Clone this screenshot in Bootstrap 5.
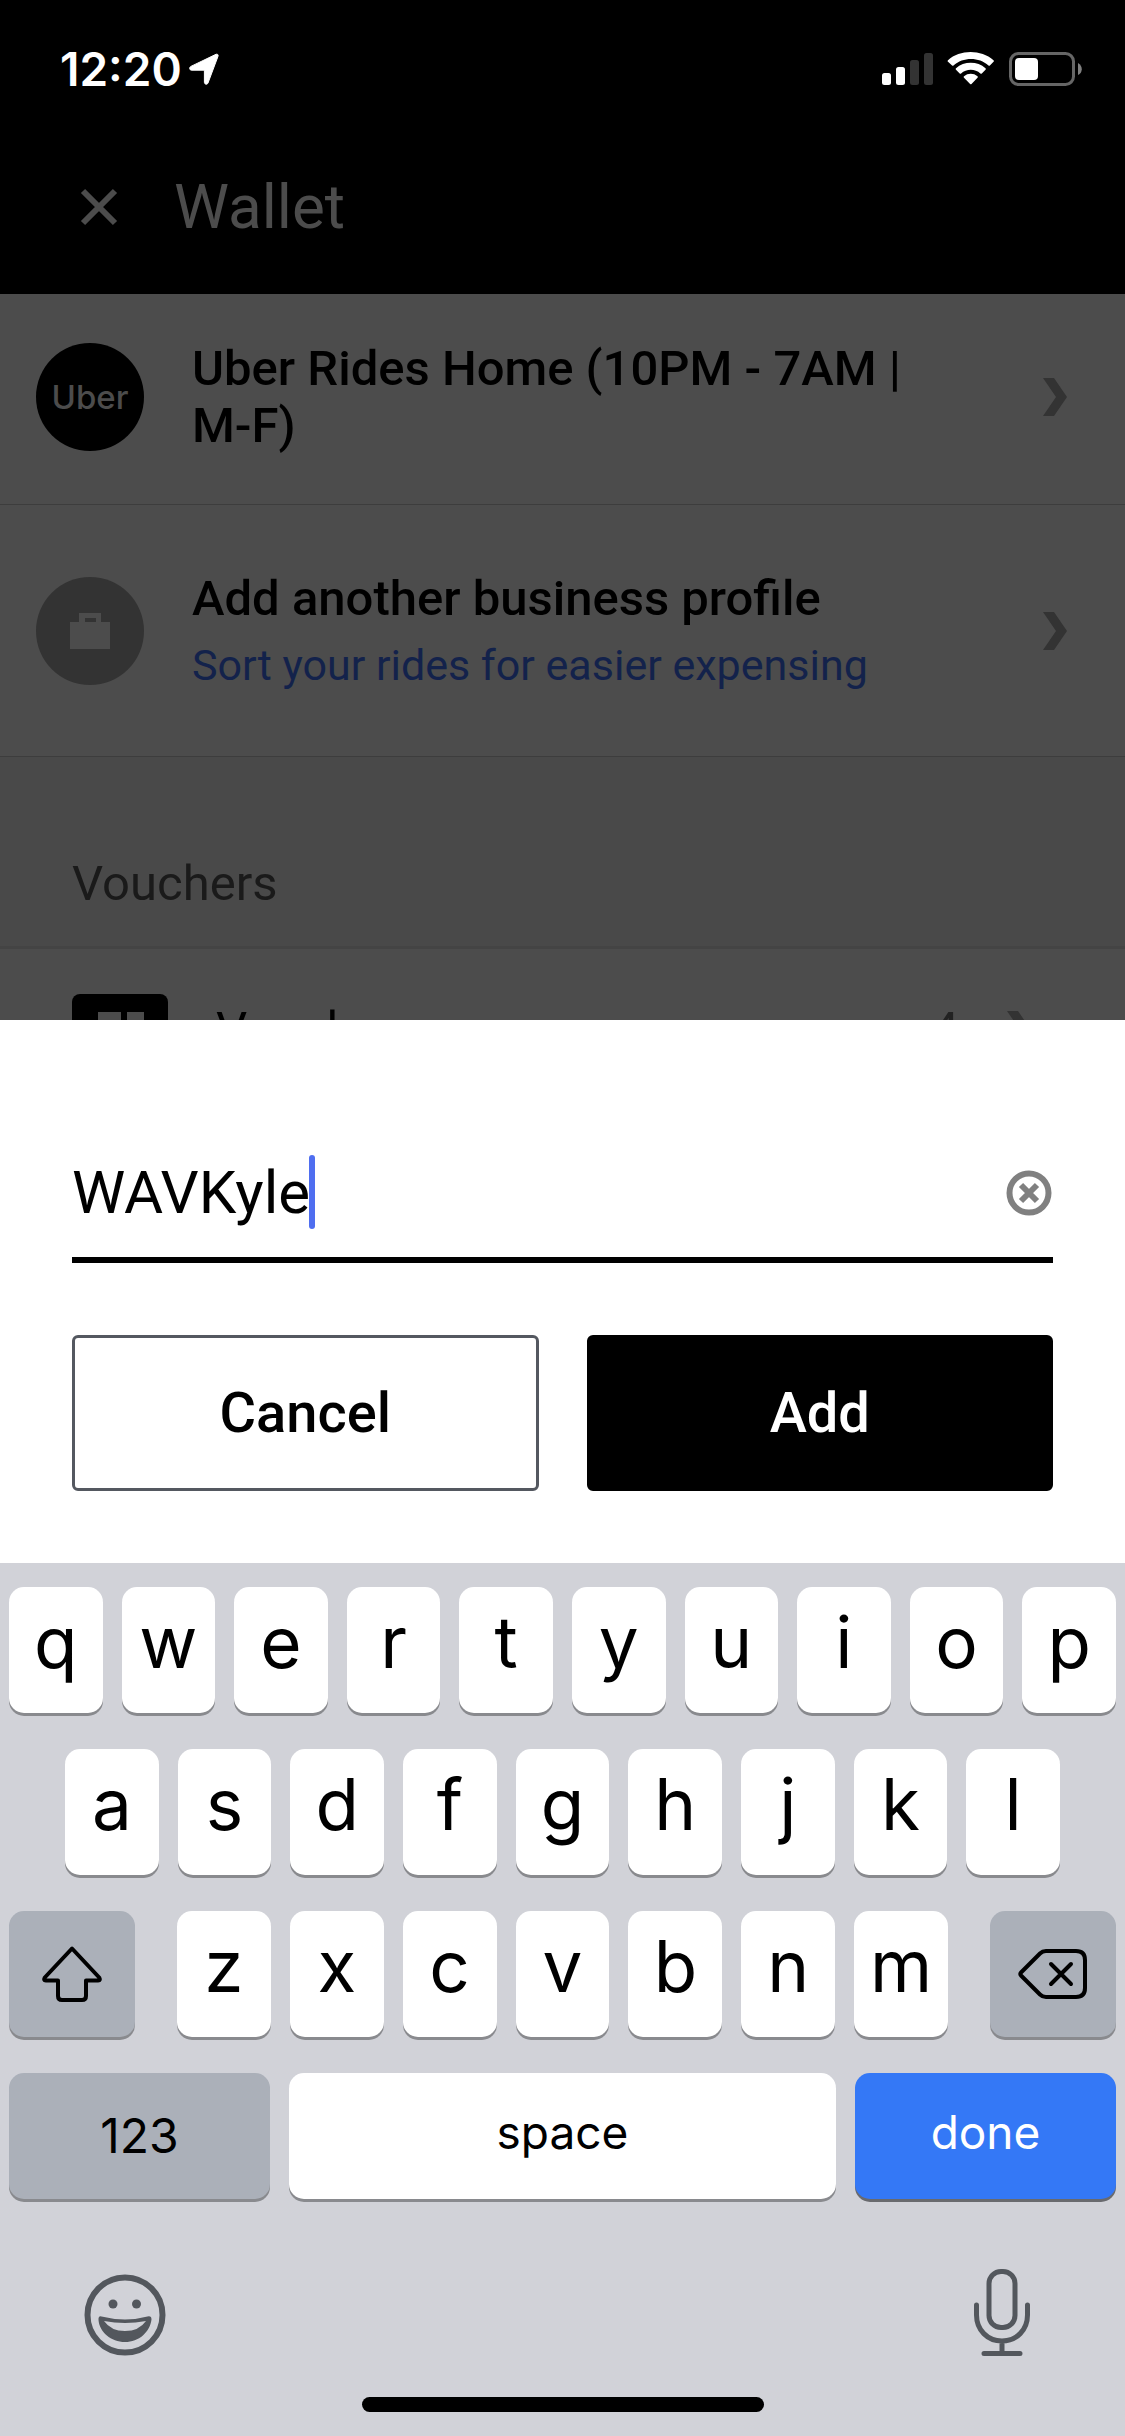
<!DOCTYPE html>
<html lang="en">
<head>
<meta charset="utf-8">
<meta name="viewport" content="width=device-width, initial-scale=1">
<title>Wallet</title>
<link href="https://cdn.jsdelivr.net/npm/bootstrap@5.3.0/dist/css/bootstrap.min.css" rel="stylesheet">
<style>
  body { font-family: Roboto, "Noto Sans", sans-serif; color: #000; }
  svg { display: block; flex: none; }
  button svg { margin: auto; }

  /* Dimmed wallet screen */
  .status-bar { font-family: Inter, Roboto, sans-serif; font-size: 46px; line-height: 54px; font-weight: 600; padding: 42px 43px 24px 60px; }
  .wallet-head { padding: 57px 72px; gap: 48px; color: #4c4c4c; }
  .wallet-head h1 { font-size: 62px; line-height: 60px; font-weight: 400; }
  .icon-btn { background: none; border: 0; padding: 0; color: inherit; }
  .wallet-list { background: #4c4c4c; min-height: 0; }
  .profile-row { padding: 46px 58px 50px 36px; gap: 48px; border-bottom: 1px solid #3d3d3d; color: #000; text-decoration: none; }
  .profile-row.tall { padding-top: 65px; padding-bottom: 65px; }
  .row-title { font-size: 49px; line-height: 57px; font-weight: 500; }
  .row-sub { font-size: 43px; line-height: 52px; margin-top: 12px; color: #13224b; }
  .avatar { width: 108px; height: 108px; background: #000; color: #4c4c4c; }
  .avatar.muted { background: #333; }
  .brand-word { font-family: Inter, sans-serif; font-size: 33px; line-height: 36px; font-weight: 500; }
  .chev { color: #333; }
  .section-head { background: #494949; color: #1a1a1a; font-size: 49px; line-height: 60px; font-weight: 400; padding: 97px 72px 32px; border-bottom: 3px solid #444; }
  .voucher-row { padding: 45px 94px 45px 72px; gap: 48px; font-size: 49px; line-height: 72px; color: #000; text-decoration: none; }
  .voucher-count { color: #222; }

  /* Code entry sheet */
  .entry-sheet { padding: 120px 72px 72px; background: #fff; }
  .code-field { border-bottom: 6px solid #000; padding-bottom: 12px; margin-bottom: 72px; }
  .code-input { border: 0; outline: 0; padding: 0; background: none; min-width: 0; font-size: 60px; height: 105px; font-weight: 400; color: #000; }
  .caret { left: 237px; top: 15px; width: 6px; height: 74px; border-radius: 3px; background: #4f6ef0; }
  .sheet-btn { height: 156px; border: 3px solid #545860; border-radius: 6px; font-size: 56px; line-height: 60px; font-weight: 500; padding: 0; }
  .sheet-btn.solid { border-color: #000; }

  /* On-screen keyboard */
  .keyboard { background: #d1d2d8; padding: 24px 9px; font-family: Inter, Roboto, sans-serif; }
  .key-rows { gap: 36px; }
  .key-row { gap: 19px; }
  .key { height: 126px; border: 0; border-radius: 15px; background: #fff; color: #000; box-shadow: 0 3px 0 #898a8e; font-size: 71px; line-height: 72px; font-weight: 400; padding: 0 0 16px; flex: 1 1 0; min-width: 0; }
  .key.grey { background: #abb0b9; }
  .key.word { font-size: 46px; line-height: 54px; padding-bottom: 8px; }
  .key.digits { font-size: 48px; padding-bottom: 0; }
  .key.side { flex: 0 0 126px; padding: 0; }
  .key.wide { flex: 0 0 261px; }
  .key.go { background: #3478f6; color: #fff; box-shadow: 0 3px 0 #696a6e; }
  .mid-keys { padding-left: 56px; padding-right: 56px; }
  .letters { margin-left: 23px; margin-right: 23px; }
  .kb-foot { padding: 69px 85px 41px 75px; color: #53575d; }
  .home-bar { width: 402px; height: 15px; border-radius: 8px; background: #000; }
</style>
</head>
<body>
<div class="vh-100 d-flex flex-column overflow-hidden">

  <header class="bg-black">
    <div class="status-bar d-flex align-items-center text-white">
      <span>12:20</span>
      <svg class="ms-1" width="34" height="34" viewBox="0 0 34 34" fill="#fff"><path d="M30 2.300c1.400-.6 2.600.5 2 2L22 31c-.8 1.900-3.600 1.500-3.600-.7V18.200H5.700c-2.400 0-2.700-2.900-.8-3.800z" stroke="#fff" stroke-width="1"/></svg>
      <div class="d-flex align-items-center ms-auto">
        <svg width="200" height="34" viewBox="0 0 200 34" fill="#fff">
          <rect x="0" y="21" width="9" height="12" rx="2.500"/><rect x="14" y="15" width="9" height="18" rx="2.500"/>
          <rect x="28" y="8" width="9" height="25" rx="2.500" fill="#333"/><rect x="42" y="1" width="9" height="32" rx="2.500" fill="#333"/>
          <path d="M66 9.700a1 1 0 0 1 0-1.500C78-2.700 99-2.700 111.500 8.200a1 1 0 0 1 0 1.500l-3.600 3.700a1 1 0 0 1-1.400 0c-9.500-8.600-25.500-8.600-35 0a1 1 0 0 1-1.400 0z"/>
          <path d="M74 17.800a1 1 0 0 1 0-1.500c8-7.300 21.500-7.300 29.500 0a1 1 0 0 1 0 1.500l-3.700 3.700a1 1 0 0 1-1.400 0c-5.300-4.900-14-4.900-19.300 0a1 1 0 0 1-1.400 0z"/>
          <path d="M82 25.800a1 1 0 0 1 0-1.500c4-3.300 9.500-3.300 13.500 0a1 1 0 0 1 0 1.500l-6 6.200a1 1 0 0 1-1.400 0z"/>
          <rect x="128.500" y="1.500" width="63" height="31" rx="8" fill="none" stroke="#666" stroke-width="3"/>
          <rect x="133" y="6" width="23" height="22" rx="4"/>
          <path d="M196 11c5 2.500 5 10 0 12z" fill="#808080"/>
        </svg>
      </div>
    </div>
    <div class="wallet-head d-flex align-items-center">
      <button class="icon-btn" type="button" aria-label="Close"><svg width="54" height="54" viewBox="0 0 54 54" stroke="currentColor" stroke-width="6"><path d="M11 11 43 43M43 11 11 43"/></svg></button>
      <h1 class="m-0">Wallet</h1>
    </div>
  </header>

  <main class="wallet-list flex-fill overflow-hidden">
    <a href="#" class="profile-row d-flex align-items-center">
      <span class="avatar rounded-circle d-flex align-items-center justify-content-center flex-shrink-0"><span class="brand-word">Uber</span></span>
      <span class="row-title flex-fill">Uber Rides Home (10PM - 7AM |<br>M-F)</span>
      <svg class="chev" width="24" height="38" viewBox="0 0 24 38" fill="currentColor"><path d="M0 0h11l13 19-13 19H0l13-19z"/></svg>
    </a>
    <a href="#" class="profile-row tall d-flex align-items-center">
      <span class="avatar muted rounded-circle d-flex align-items-center justify-content-center flex-shrink-0">
        <svg width="40" height="36" viewBox="0 0 40 36" fill="currentColor"><path fill-rule="evenodd" d="M9 0h22v9h9v27H0V9h9zM15 5v4h11V5z"/></svg>
      </span>
      <span class="flex-fill">
        <span class="row-title d-block">Add another business profile</span>
        <span class="row-sub d-block">Sort your rides for easier expensing</span>
      </span>
      <svg class="chev" width="24" height="38" viewBox="0 0 24 38" fill="currentColor"><path d="M0 0h11l13 19-13 19H0l13-19z"/></svg>
    </a>
    <h2 class="section-head m-0">Vouchers</h2>
    <a href="#" class="voucher-row d-flex align-items-center">
      <svg width="96" height="72" viewBox="0 0 96 72"><rect width="96" height="72" rx="8"/><path fill="#4c4c4c" d="M26 18h23v36H26zM55 18h17v36H55z"/></svg>
      <span class="flex-fill">Vouchers</span>
      <span class="voucher-count">4</span>
      <svg class="chev" width="24" height="38" viewBox="0 0 24 38" fill="currentColor"><path d="M0 0h11l13 19-13 19H0l13-19z"/></svg>
    </a>
  </main>

  <form class="entry-sheet">
    <div class="code-field d-flex align-items-center position-relative">
      <label for="code" class="visually-hidden">Voucher code</label>
      <input id="code" class="code-input flex-fill" type="text" value="WAVKyle">
      <span class="caret position-absolute"></span>
      <button class="icon-btn" type="button" aria-label="Clear"><svg width="48" height="48" viewBox="0 0 48 48" fill="none" stroke="#808080" stroke-width="6"><circle cx="24" cy="24" r="19.500"/><path d="M16 16 32 32M32 16 16 32"/></svg></button>
    </div>
    <div class="d-flex gap-5">
      <button type="button" class="btn sheet-btn bg-white text-black flex-fill w-50">Cancel</button>
      <button type="button" class="btn sheet-btn solid bg-black text-white flex-fill w-50">Add</button>
    </div>
  </form>

  <section class="keyboard" aria-label="Keyboard">
    <div class="key-rows d-flex flex-column">
      <div class="key-row d-flex">
        <button class="key" type="button">q</button><button class="key" type="button">w</button><button class="key" type="button">e</button><button class="key" type="button">r</button><button class="key" type="button">t</button><button class="key" type="button">y</button><button class="key" type="button">u</button><button class="key" type="button">i</button><button class="key" type="button">o</button><button class="key" type="button">p</button>
      </div>
      <div class="key-row mid-keys d-flex">
        <button class="key" type="button">a</button><button class="key" type="button">s</button><button class="key" type="button">d</button><button class="key" type="button">f</button><button class="key" type="button">g</button><button class="key" type="button">h</button><button class="key" type="button">j</button><button class="key" type="button">k</button><button class="key" type="button">l</button>
      </div>
      <div class="key-row d-flex">
        <button class="key grey side" type="button" aria-label="Shift"><svg width="62" height="58" viewBox="0 0 62 58" fill="none" stroke="#000" stroke-width="4" stroke-linejoin="round"><path d="M31 3.500 3.800 32.500q-1.500 3 1 3H17V51q0 4 4 4h20q4 0 4-4V35.500h12.200q2.500 0 1-3z"/></svg></button>
        <div class="key-row letters d-flex flex-fill">
          <button class="key" type="button">z</button><button class="key" type="button">x</button><button class="key" type="button">c</button><button class="key" type="button">v</button><button class="key" type="button">b</button><button class="key" type="button">n</button><button class="key" type="button">m</button>
        </div>
        <button class="key grey side" type="button" aria-label="Delete"><svg width="72" height="52" viewBox="0 0 72 52" fill="none" stroke="#000" stroke-width="4" stroke-linejoin="round" stroke-linecap="round"><path d="M29 3h30q9 0 9 9v28q0 9-9 9H29q-3.500 0-6-2.500L4 27.500q-1.500-1.500 0-3L23 5.500Q25.500 3 29 3zM34 16l20 20M54 16 34 36"/></svg></button>
      </div>
      <div class="key-row d-flex">
        <button class="key grey word digits wide" type="button">123</button>
        <button class="key word" type="button">space</button>
        <button class="key word go wide" type="button">done</button>
      </div>
    </div>
    <div class="kb-foot d-flex justify-content-between align-items-end">
      <button class="icon-btn" type="button" aria-label="Emoji"><svg width="82" height="82" viewBox="0 0 82 82"><circle cx="41" cy="41" r="37.500" fill="none" stroke="currentColor" stroke-width="6"/><circle cx="29" cy="30" r="4.500" fill="currentColor"/><circle cx="52.500" cy="30" r="4.500" fill="currentColor"/><path fill="currentColor" fill-rule="evenodd" d="M17.500 42.500q24 6 46 0 4-1 4 3C66 58 55 68 41 68S15.500 58 14.500 46q-.3-4.500 3-3.500zM20 47q7 10 21 10t21-10q-21 4-42 0z"/></svg></button>
      <button class="icon-btn" type="button" aria-label="Dictate"><svg width="58" height="88" viewBox="0 0 58 88" fill="none" stroke="currentColor" stroke-width="5" stroke-linecap="round"><rect x="16" y="3.500" width="26" height="56" rx="12"/><path d="M3.500 37v10c0 15 11 26 25.500 26s25.500-11 25.500-26V37M29 73v12M11 85.500h36"/></svg></button>
    </div>
    <div class="home-bar mx-auto"></div>
  </section>
</div>
<script src="https://cdn.jsdelivr.net/npm/bootstrap@5.3.0/dist/js/bootstrap.bundle.min.js"></script>
</body>
</html>
